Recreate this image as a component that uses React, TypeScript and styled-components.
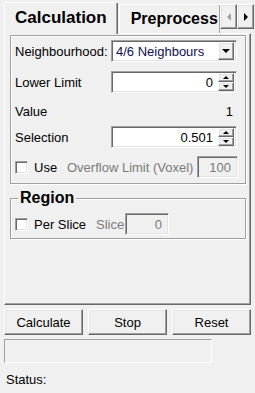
import React from 'react';
import styled, { createGlobalStyle, css } from 'styled-components';

const GlobalStyle = createGlobalStyle`
  html, body {
    margin: 0;
    padding: 0;
    background: #f0f0f0;
  }
  body {
    font-family: "Liberation Sans", Arial, sans-serif;
    font-size: 13px;
    color: #000;
  }
`;

const raised = css`
  box-sizing: border-box;
  background: #f0f0f0;
  border: 1px solid;
  border-color: #fff #696969 #696969 #fff;
  box-shadow: inset -1px -1px 0 #a0a0a0, inset 1px 1px 0 #e3e3e3;
`;

const sunken = css`
  box-sizing: border-box;
  border: 1px solid;
  border-color: #a0a0a0 #fff #fff #a0a0a0;
  box-shadow: inset 1px 1px 0 #696969, inset -1px -1px 0 #e3e3e3;
`;

const Window = styled.div`
  width: 255px;
  height: 393px;
  display: flex;
  flex-direction: column;
  overflow: hidden;
`;

const TabStrip = styled.div`
  height: 34px;
  display: flex;
  position: relative;
  z-index: 2;
`;

const TabViewport = styled.div`
  flex: 1;
  min-width: 0;
  display: flex;
  align-items: flex-end;
  overflow: hidden;
  padding-left: 4px;
`;

const Tab = styled.div<{ $active?: boolean }>`
  flex-shrink: 0;
  box-sizing: border-box;
  background: #f0f0f0;
  border-top: 1px solid #fff;
  border-left: 1px solid #fff;
  border-right: 1px solid #696969;
  box-shadow: inset -1px 0 0 #a0a0a0;
  border-top-left-radius: 2px;
  border-top-right-radius: 2px;
  font-weight: bold;
  line-height: 20px;
  white-space: nowrap;
  ${p =>
    p.$active
      ? css`
          font-size: 17px;
          height: 32px;
          padding: 5px 10px 0 10px;
          margin-right: 1px;
        `
      : css`
          font-size: 16px;
          height: 29px;
          padding: 4px 2px 0 11px;
          margin-bottom: 1px;
        `}
`;

const ScrollArrows = styled.div`
  flex-shrink: 0;
  display: flex;
  margin: 4px 1px 0 0;
  height: 25px;
`;

const ArrowButton = styled.div`
  ${raised};
  width: 17px;
  height: 25px;
  display: flex;
  align-items: center;
  justify-content: center;
`;

const Triangle = styled.span<{ $dir: 'left' | 'right' | 'up' | 'down'; $disabled?: boolean; $size?: number }>`
  width: 0;
  height: 0;
  ${p => {
    const s = p.$size ?? 4;
    const c = p.$disabled ? '#a0a0a0' : '#000';
    switch (p.$dir) {
      case 'left':
        return css`
          border-top: ${s}px solid transparent;
          border-bottom: ${s}px solid transparent;
          border-right: ${s}px solid ${c};
        `;
      case 'right':
        return css`
          border-top: ${s}px solid transparent;
          border-bottom: ${s}px solid transparent;
          border-left: ${s}px solid ${c};
        `;
      case 'up':
        return css`
          border-left: ${s}px solid transparent;
          border-right: ${s}px solid transparent;
          border-bottom: ${s}px solid ${c};
        `;
      default:
        return css`
          border-left: ${s}px solid transparent;
          border-right: ${s}px solid transparent;
          border-top: ${s}px solid ${c};
        `;
    }
  }}
`;

const Panel = styled.div`
  box-sizing: border-box;
  margin: -1px 0 0 4px;
  width: 247px;
  height: 272px;
  border: 1px solid;
  border-color: #fff #696969 #696969 #fff;
  box-shadow: inset -1px -1px 0 #a0a0a0;
  padding: 1px 4px 0 5px;
  display: flex;
  flex-direction: column;
`;

const GroupBox = styled.div`
  box-sizing: border-box;
  height: 149px;
  border: 1px solid #a0a0a0;
  box-shadow: inset 1px 1px 0 #fff, 1px 1px 0 #fff;
  padding: 0 7px 0 4px;
`;

const Fieldset = styled.fieldset`
  box-sizing: border-box;
  margin: 5px 0 0 0;
  min-width: 0;
  border: 1px solid #a0a0a0;
  box-shadow: inset 1px 1px 0 #fff, 1px 1px 0 #fff;
  padding: 0 7px 3px 4px;
`;

const Legend = styled.legend`
  background: #f0f0f0;
  font-weight: bold;
  font-size: 16px;
  line-height: 18px;
  padding: 0 2px;
  margin-left: 3px;
`;

const Row = styled.div<{ $mt: number }>`
  display: flex;
  align-items: center;
  height: 22px;
  margin-top: ${p => p.$mt}px;
`;

const Label = styled.span`
  flex: 0 0 96px;
  white-space: nowrap;
`;

const Hint = styled.span<{ $w?: number }>`
  color: #7a7a7a;
  white-space: nowrap;
  ${p => p.$w && `flex: 0 0 ${p.$w}px;`}
`;

const ValueText = styled.span`
  flex: 1;
  text-align: right;
  padding-right: 5px;
`;

const Combo = styled.div`
  ${sunken};
  background: #fff;
  width: 126px;
  height: 22px;
  display: flex;
  align-items: center;
  padding: 2px 2px 2px 4px;
  color: #101050;
`;

const ComboText = styled.span`
  flex: 1;
  white-space: nowrap;
`;

const DropButton = styled.div`
  ${raised};
  width: 16px;
  height: 18px;
  display: flex;
  align-items: center;
  justify-content: center;
`;

const Field = styled.div<{ $w: number; $disabled?: boolean }>`
  ${sunken};
  background: ${p => (p.$disabled ? '#f0f0f0' : '#fff')};
  color: ${p => (p.$disabled ? '#7a7a7a' : '#000')};
  width: ${p => p.$w}px;
  height: 22px;
  display: flex;
  align-items: center;
  justify-content: flex-end;
  padding: 2px 6px 2px 2px;
`;

const SpinField = styled(Field)`
  padding: 2px 2px 2px 2px;
`;

const SpinValue = styled.span`
  flex: 1;
  text-align: right;
  padding-right: 5px;
`;

const SpinButtons = styled.div`
  display: flex;
  flex-direction: column;
  width: 16px;
  height: 18px;
`;

const SpinButton = styled.div`
  ${raised};
  flex: 1;
  display: flex;
  align-items: center;
  justify-content: center;
`;

const CheckBox = styled.span`
  ${sunken};
  background: #fff;
  width: 13px;
  height: 13px;
  flex: 0 0 13px;
  margin-right: 6px;
`;

const CheckLabel = styled.span<{ $w: number }>`
  flex: 0 0 ${p => p.$w}px;
  white-space: nowrap;
`;

const ButtonRow = styled.div`
  display: flex;
  gap: 5px;
  padding: 4px 0 0 4px;
`;

const Button = styled.div`
  ${raised};
  width: 79px;
  height: 26px;
  display: flex;
  align-items: center;
  justify-content: center;
`;

const Progress = styled.div`
  box-sizing: border-box;
  margin: 4px 0 0 4px;
  width: 208px;
  height: 24px;
  border: 1px solid;
  border-color: #a0a0a0 #fff #fff #a0a0a0;
`;

const Status = styled.div`
  padding: 9px 0 0 6px;
  line-height: 15px;
`;

function Spinner({ value }: { value: string }) {
  return (
    <SpinField $w={126}>
      <SpinValue>{value}</SpinValue>
      <SpinButtons>
        <SpinButton>
          <Triangle $dir="up" $size={3} />
        </SpinButton>
        <SpinButton>
          <Triangle $dir="down" $size={3} />
        </SpinButton>
      </SpinButtons>
    </SpinField>
  );
}

export default function App() {
  return (
    <Window>
      <GlobalStyle />
      <TabStrip>
        <TabViewport>
          <Tab $active>Calculation</Tab>
          <Tab>Preprocess</Tab>
        </TabViewport>
        <ScrollArrows>
          <ArrowButton>
            <Triangle $dir="left" $disabled />
          </ArrowButton>
          <ArrowButton>
            <Triangle $dir="right" />
          </ArrowButton>
        </ScrollArrows>
      </TabStrip>
      <Panel>
        <GroupBox>
          <Row $mt={4}>
            <Label>Neighbourhood:</Label>
            <Combo>
              <ComboText>4/6 Neighbours</ComboText>
              <DropButton>
                <Triangle $dir="down" $size={4} />
              </DropButton>
            </Combo>
          </Row>
          <Row $mt={9}>
            <Label>Lower Limit</Label>
            <Spinner value="0" />
          </Row>
          <Row $mt={7}>
            <Label>Value</Label>
            <ValueText>1</ValueText>
          </Row>
          <Row $mt={4}>
            <Label>Selection</Label>
            <Spinner value="0.501" />
          </Row>
          <Row $mt={8}>
            <CheckBox />
            <CheckLabel $w={33}>Use</CheckLabel>
            <Hint $w={130}>Overflow Limit (Voxel)</Hint>
            <Field $w={43} $disabled>
              100
            </Field>
          </Row>
        </GroupBox>
        <Fieldset>
          <Legend>Region</Legend>
          <Row $mt={6}>
            <CheckBox />
            <CheckLabel $w={62}>Per Slice</CheckLabel>
            <Hint $w={29}>Slice</Hint>
            <Field $w={44} $disabled>
              0
            </Field>
          </Row>
        </Fieldset>
      </Panel>
      <ButtonRow>
        <Button>Calculate</Button>
        <Button>Stop</Button>
        <Button>Reset</Button>
      </ButtonRow>
      <Progress />
      <Status>Status:</Status>
    </Window>
  );
}
